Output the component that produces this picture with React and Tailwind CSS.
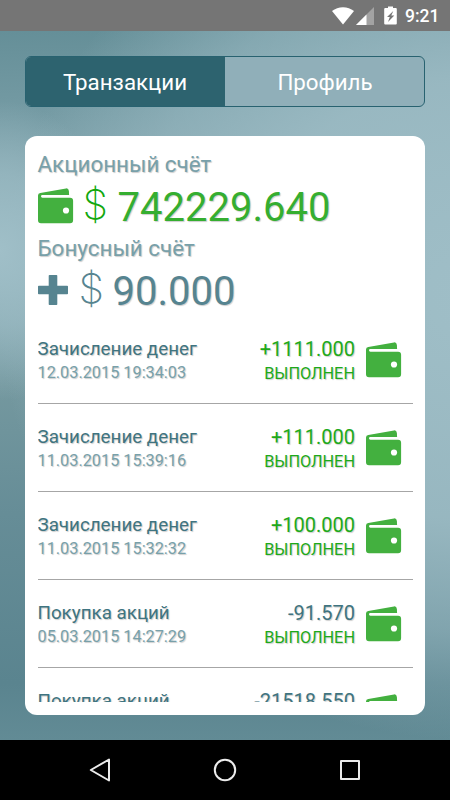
import { useState } from 'react'

const tabs = ['Транзакции', 'Профиль']

const transactions = [
  { title: 'Зачисление денег', date: '12.03.2015 19:34:03', amount: '+1111.000', status: 'ВЫПОЛНЕН' },
  { title: 'Зачисление денег', date: '11.03.2015 15:39:16', amount: '+111.000', status: 'ВЫПОЛНЕН' },
  { title: 'Зачисление денег', date: '11.03.2015 15:32:32', amount: '+100.000', status: 'ВЫПОЛНЕН' },
  { title: 'Покупка акций', date: '05.03.2015 14:27:29', amount: '-91.570', status: 'ВЫПОЛНЕН' },
  { title: 'Покупка акций', date: '', amount: '-21518.550', status: '' },
]

function WalletIcon() {
  return (
    <svg width="36" height="36" viewBox="0 0 36 36" className="shrink-0" aria-hidden="true">
      <path
        fill="#43b03f"
        d="M0 7.6Q0 5.3 2.3 4.9L28 0.4Q30.6 0.1 30.9 3L31.1 7H4.4Q3 7 3 8.3T4.4 9.7H32.1Q35.1 9.7 35.1 12.8V32.2Q35.1 35.2 32.1 35.2H3Q0 35.2 0 32.2Z"
      />
      <circle cx="28" cy="22.5" r="3.1" fill="#fff" />
    </svg>
  )
}

function PlusIcon() {
  return (
    <svg width="30" height="30" viewBox="0 0 30 30" className="shrink-0" aria-hidden="true">
      <path
        fill="#568490"
        d="M11.5 0H18.5Q19.3 0 19.3 0.8V10.7H29.2Q30 10.7 30 11.5V18.5Q30 19.3 29.2 19.3H19.3V29.2Q19.3 30 18.5 30H11.5Q10.7 30 10.7 29.2V19.3H0.8Q0 19.3 0 18.5V11.5Q0 10.7 0.8 10.7H10.7V0.8Q10.7 0 11.5 0Z"
      />
    </svg>
  )
}

function StatusBar() {
  return (
    <div className="h-[31px] shrink-0 bg-[#757575] flex items-center justify-end pr-[10px] text-white">
      <svg width="22" height="18" viewBox="0 0 22 18" className="mr-[-1px]" aria-hidden="true">
        <path fill="#fff" d="M11 17.6L0 4Q4.8 0.2 11 0.2T22 4Z" />
      </svg>
      <svg width="18" height="18" viewBox="0 0 18 18" className="ml-[3px]" aria-hidden="true">
        <path fill="#a3a3a3" d="M18 0V18H0Z" />
        <path fill="#fff" d="M10.5 7.5V18H0Z" />
      </svg>
      <svg width="13" height="19" viewBox="0 0 13 19" className="ml-[10px]" aria-hidden="true">
        <path fill="#fff" d="M4 0.5H9V2H11.8Q12.8 2 12.8 3V17.5Q12.8 18.5 11.8 18.5H1.2Q0.2 18.5 0.2 17.5V3Q0.2 2 1.2 2H4Z" />
        <path fill="#757575" d="M9.3 5L3 11H5.8L4 16L10.3 9.6H7.3Z" />
      </svg>
      <span className="ml-2 w-[35px] text-[17.5px] leading-none font-medium mt-[3px]">9:21</span>
    </div>
  )
}

function NavBar() {
  return (
    <div className="h-[60px] shrink-0 bg-black flex items-center justify-center gap-[101px]">
      <svg width="24" height="24" viewBox="0 0 24 24" fill="none" stroke="#ececec" strokeWidth="2" strokeLinejoin="round">
        <path d="M21 1.5V22.5L2.8 12Z" />
      </svg>
      <svg width="24" height="24" viewBox="0 0 24 24" fill="none" stroke="#ececec" strokeWidth="2">
        <circle cx="12" cy="12" r="10.2" />
      </svg>
      <svg width="24" height="24" viewBox="0 0 24 24" fill="none" stroke="#ececec" strokeWidth="2" strokeLinejoin="round">
        <path d="M3 3H21V21H3Z" />
      </svg>
    </div>
  )
}

function Transaction({ item }) {
  const income = item.amount.startsWith('+')

  return (
    <li className="h-[88px] shrink-0 flex items-start pt-[21px] border-b border-[#a6a6a6] pr-[10.5px]">
      <div className="flex-1">
        <div className="text-[18.8px] leading-6 text-[#3f7480]">{item.title}</div>
        <div className="text-[16.3px] leading-6 text-[#78a0a9]">{item.date}</div>
      </div>
      <div className="text-right mr-[11px]">
        <div className={`text-[20px] leading-6 ${income ? 'text-[#1eaa1a]' : 'text-[#3f7480]'}`}>{item.amount}</div>
        <div className="mt-px text-[16.3px] leading-6 text-[#1eaa1a]">{item.status}</div>
      </div>
      <div className="mt-[5px]">
        <WalletIcon />
      </div>
    </li>
  )
}

export default function App() {
  const [active, setActive] = useState(tabs[0])

  return (
    <div className="w-[450px] h-[800px] flex flex-col overflow-hidden font-['Roboto',sans-serif]">
      <StatusBar />

      <main className="flex-1 min-h-0 flex flex-col px-[25px] pt-[25px] pb-[25px] bg-[radial-gradient(ellipse_120px_150px_at_0_31%,#a0bfc8_0%,#a0bfc8a0_50%,#a0bfc800_100%),radial-gradient(ellipse_480px_440px_at_106%_38%,#9fbec7_0%,#9cbbc4e8_50%,#9cbbc490_75%,#9cbbc400_100%),linear-gradient(to_bottom,#658f98_0%,#7da1aa_18%,#86a9b2_34%,#74989f_50%,#668d97_68%,#5a848f_92%,#628b95_100%)]">
        {/* Tabs */}
        <div className="h-[51px] shrink-0 flex rounded-[6px] border border-[#286270] bg-[#90afb9] overflow-hidden">
          {tabs.map((tab) => (
            <button
              key={tab}
              onClick={() => setActive(tab)}
              className={`flex-1 text-[22.3px] text-white pt-[3px] ${tab === active ? 'bg-[#2d636f] pr-px' : 'pl-px'}`}
            >
              {tab}
            </button>
          ))}
        </div>

        {/* Accounts */}
        <section className="mt-[28.5px] flex-1 min-h-0 flex flex-col rounded-xl bg-white px-[12.5px] pt-3 pb-[13px] [text-shadow:1px_1px_1px_rgba(0,0,0,0.2)]">
          <div className="text-[22.4px] leading-8 text-[#78a0a9]">Акционный счёт</div>
          <div className="h-[52px] shrink-0 flex items-center text-[#35ae30]">
            <WalletIcon />
            <span className="ml-[9px] w-6 mt-[-3px] font-['Inter',sans-serif] text-[41px] leading-none font-extralight text-[#12a80e] [text-shadow:none]">$</span>
            <span className="ml-[11px] mt-1 text-[40px]">742229.640</span>
          </div>
          <div className="text-[22.4px] leading-8 text-[#78a0a9]">Бонусный счёт</div>
          <div className="h-[52px] shrink-0 flex items-center text-[#568490]">
            <PlusIcon />
            <span className="ml-[11px] w-6 mt-[-3px] font-['Inter',sans-serif] text-[41px] leading-none font-extralight [text-shadow:none]">$</span>
            <span className="ml-[10px] mt-1 text-[40px]">90.000</span>
          </div>

          {/* History */}
          <ul className="flex-1 min-h-0 flex flex-col overflow-hidden">
            {transactions.map((item, i) => (
              <Transaction key={i} item={item} />
            ))}
          </ul>
        </section>
      </main>

      <NavBar />
    </div>
  )
}
